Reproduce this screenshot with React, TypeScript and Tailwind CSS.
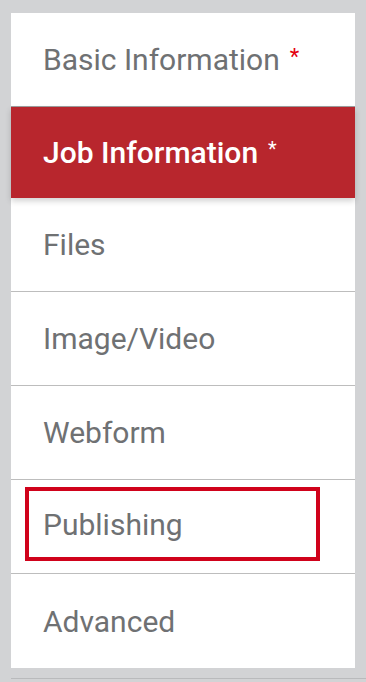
const rows = [
  { label: 'Files' },
  { label: 'Image/Video' },
  { label: 'Webform' },
];

export default function App() {
  return (
    <div className="min-h-[682px] w-[366px] bg-[#d2d3d5] pt-[13px] pl-[11px] font-['Roboto',sans-serif] overflow-hidden">
      <div className="w-[344px] bg-white">
        <div className="h-[94px] flex items-center pl-[32px] border-b border-[#9e9e9e]">
          <span className="text-[30px] text-[#6f7173]">Basic Information</span>
          <span className="ml-[10px] text-[22px] text-[#e4000f] leading-none -mt-[6px]">*</span>
        </div>
        <div className="relative z-10 h-[91px] flex items-center pl-[32px] bg-[#b8262d] shadow-[0_3px_6px_rgba(0,0,0,0.18)]">
          <span className="text-[30px] font-medium text-white">Job Information</span>
          <span className="ml-[10px] text-[20px] text-white leading-none -mt-[8px]">*</span>
        </div>
        {rows.map((r) => (
          <div key={r.label} className="h-[94px] flex items-center pl-[32px] border-b border-[#bdbdbd]">
            <span className="text-[30px] text-[#6f7173]">{r.label}</span>
          </div>
        ))}
        <div className="h-[94px] pt-[7px] pl-[14px] border-b border-[#bdbdbd]">
          <div className="w-[295px] h-[74px] border-4 border-[#d0021b] pl-[14px] flex items-center">
            <span className="text-[30px] text-[#6f7173]">Publishing</span>
          </div>
        </div>
        <div className="h-[94px] flex items-center pl-[32px]">
          <span className="text-[30px] text-[#6f7173]">Advanced</span>
        </div>
      </div>
      <div className="mt-[10px] h-px bg-[#b9babc]" />
    </div>
  );
}
